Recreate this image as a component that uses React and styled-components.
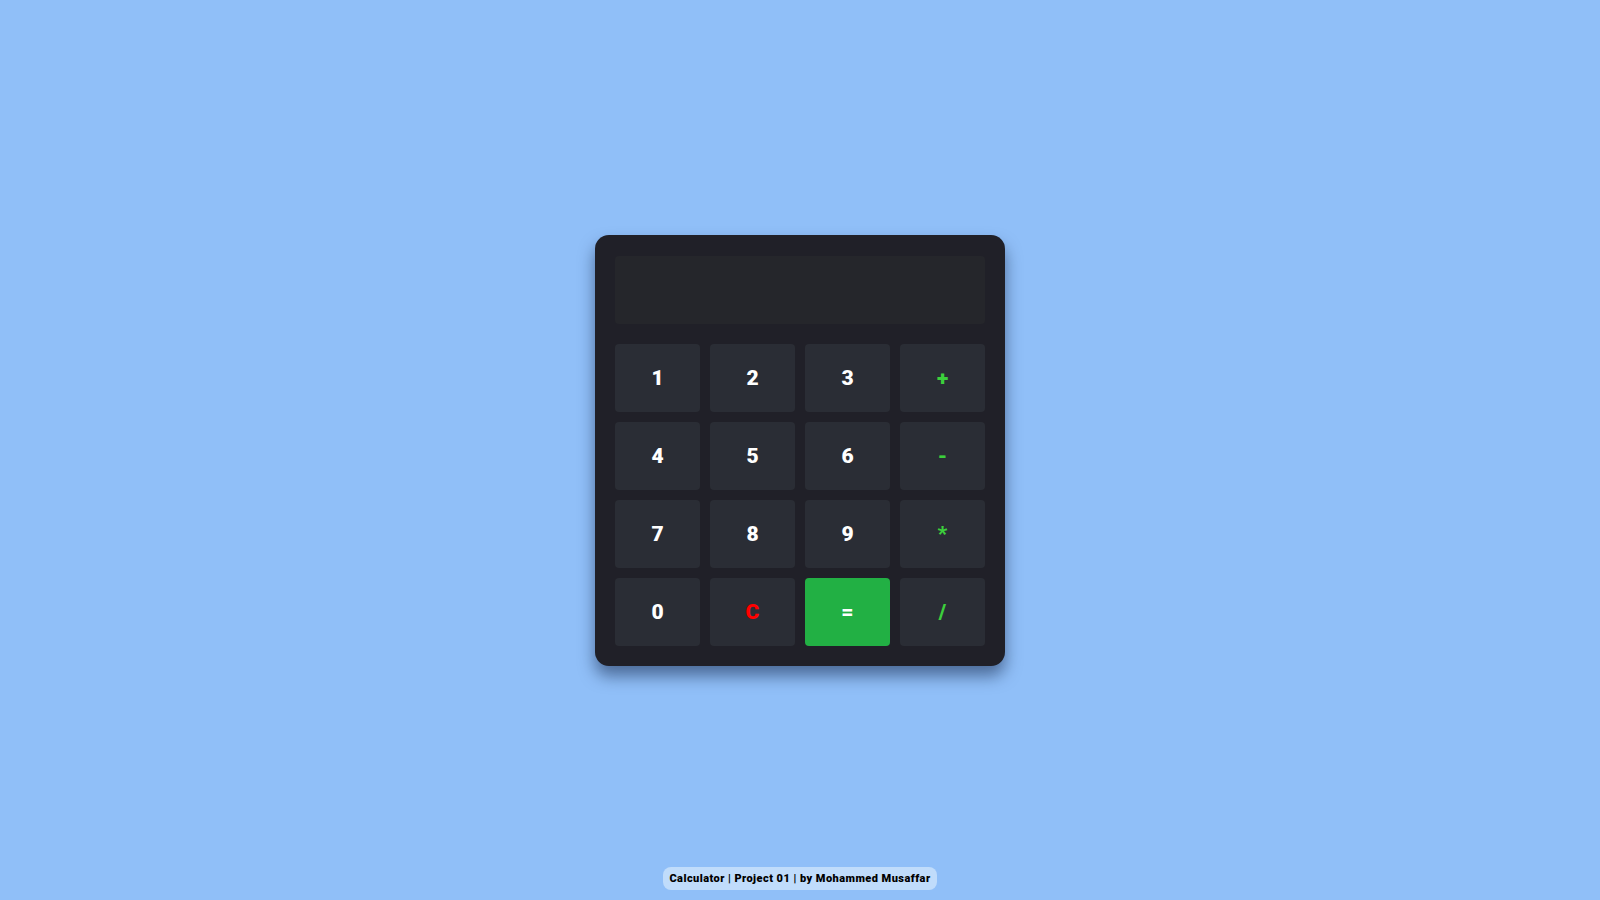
import React from 'react';
import styled, { createGlobalStyle } from 'styled-components';

const GlobalStyle = createGlobalStyle`
  html, body {
    margin: 0;
    padding: 0;
    background: #90bff8;
    font-family: "Arial Black", "Roboto", "Liberation Sans", sans-serif;
  }
`;

const Page = styled.div`
  min-height: 100vh;
  display: grid;
  grid-template-rows: 1fr auto 1fr;
  justify-items: center;
`;

const Calculator = styled.div`
  grid-row: 2;
  width: 370px;
  padding: 21px 20px 20px;
  background: #202028;
  border-radius: 14px;
  box-shadow: 0 10px 16px rgba(10, 25, 60, 0.5);
`;

const Display = styled.div`
  height: 68px;
  margin-bottom: 20px;
  background: #25262b;
  border-radius: 4px;
`;

const Keys = styled.div`
  display: grid;
  grid-template-columns: repeat(4, 1fr);
  grid-auto-rows: 68px;
  gap: 10px;
`;

const Key = styled.button`
  border: none;
  border-radius: 4px;
  background: ${(p) => (p.$accent ? '#22b044' : '#2a2d35')};
  color: ${(p) => p.$color || '#ffffff'};
  font-family: inherit;
  font-size: 21px;
  font-weight: 900;
  display: flex;
  align-items: center;
  justify-content: center;
  padding: 0;
  cursor: pointer;
`;

const Footer = styled.footer`
  grid-row: 3;
  align-self: end;
  margin-bottom: 10px;
  padding: 5px 6px;
  background: #c0dcfb;
  border-radius: 8px;
  color: #000;
  font-size: 11px;
  font-weight: 900;
  letter-spacing: 0.45px;
`;

const green = '#3ccf3c';

const keys = [
  { label: '1' }, { label: '2' }, { label: '3' }, { label: '+', color: green },
  { label: '4' }, { label: '5' }, { label: '6' }, { label: '-', color: green },
  { label: '7' }, { label: '8' }, { label: '9' }, { label: '*', color: green },
  { label: '0' }, { label: 'C', color: '#ff0000' }, { label: '=', accent: true }, { label: '/', color: green },
];

export default function App() {
  return (
    <>
      <GlobalStyle />
      <Page>
        <Calculator>
          <Display />
          <Keys>
            {keys.map((k) => (
              <Key key={k.label} $color={k.color} $accent={k.accent}>
                {k.label}
              </Key>
            ))}
          </Keys>
        </Calculator>
        <Footer>Calculator | Project 01 | by Mohammed Musaffar</Footer>
      </Page>
    </>
  );
}
